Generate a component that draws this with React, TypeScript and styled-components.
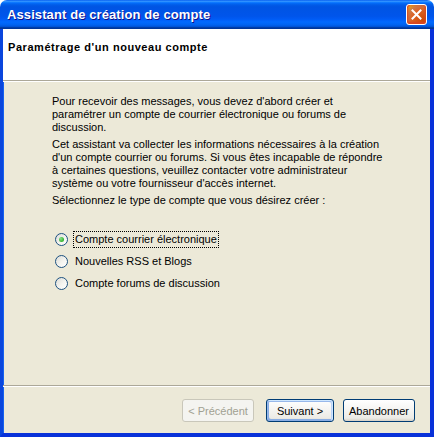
import React from "react";
import styled, { createGlobalStyle } from "styled-components";

const Global = createGlobalStyle`
  html, body { margin: 0; padding: 0; background: #ffffff; }
  body { width: 434px; height: 437px; overflow: hidden; }
  * { box-sizing: border-box; }
`;

const Window = styled.div`
  width: 434px;
  height: 437px;
  display: flex;
  flex-direction: column;
  border-radius: 7px 7px 0 0;
  overflow: hidden;
  font-family: "Liberation Sans", Arial, sans-serif;
  font-size: 11px;
  color: #000;
`;

const TitleBar = styled.div`
  height: 29px;
  flex: none;
  display: flex;
  align-items: center;
  justify-content: space-between;
  padding: 0 7px 0 7px;
  background: linear-gradient(
    180deg,
    #0058ee 0%,
    #3593ff 4%,
    #288eff 6%,
    #127dff 8%,
    #036ffc 10%,
    #0262ee 14%,
    #0057e5 20%,
    #0054e3 24%,
    #0055eb 56%,
    #005bf5 66%,
    #026afe 76%,
    #0062ef 86%,
    #0052d6 92%,
    #0040ab 94%,
    #003092 100%
  );
`;

const Title = styled.span`
  font-family: "Liberation Sans", Arial, sans-serif;
  font-weight: bold;
  font-size: 13px;
  color: #fff;
  text-shadow: 1px 1px #0f1089;
  letter-spacing: 0.1px;
`;

const CloseButton = styled.div`
  width: 21px;
  height: 21px;
  border: 1px solid #fff;
  border-radius: 3px;
  display: flex;
  align-items: center;
  justify-content: center;
  background: radial-gradient(circle at 90% 90%, #cc4600 0, #dc6527 55%, #cd7546 70%, #e5a01a 90%, transparent 93%),
    #e04c28;
  box-shadow: inset 0 -1px 2px 1px #da4623;
`;

const Frame = styled.div`
  flex: 1;
  display: flex;
  flex-direction: column;
  border-left: 3px solid #0a46dd;
  border-right: 4px solid #0831d9;
  border-bottom: 4px solid #0831d9;
  background: #ece9d8;
  box-shadow: inset 1px 0 #1662f0;
`;

const Header = styled.div`
  height: 52px;
  flex: none;
  background: #fff;
  border-bottom: 1px solid #aca899;
  padding: 12px 0 0 5px;
`;

const HeaderTitle = styled.div`
  font-weight: bold;
  font-size: 11px;
  line-height: 13px;
  letter-spacing: 0.55px;
`;

const Content = styled.div`
  flex: 1;
  border-top: 1px solid #fff;
  padding: 13px 0 0 49px;
  display: flex;
  flex-direction: column;
`;

const Para = styled.p`
  margin: 0 0 4px 0;
  line-height: 13px;
  white-space: nowrap;
`;

const RadioList = styled.div`
  margin-top: 22px;
  display: flex;
  flex-direction: column;
  gap: 9px;
  padding-left: 3px;
`;

const RadioRow = styled.label`
  display: flex;
  align-items: center;
  height: 13px;
  gap: 6px;
`;

const RadioCircle = styled.span<{ $checked?: boolean }>`
  width: 13px;
  height: 13px;
  border-radius: 50%;
  border: 1px solid #1c5180;
  background: linear-gradient(135deg, #dcdcd7 0%, #f4f4f0 55%, #ffffff 100%);
  display: flex;
  align-items: center;
  justify-content: center;
  flex: none;
  &::after {
    content: "";
    display: ${(p) => (p.$checked ? "block" : "none")};
    width: 5px;
    height: 5px;
    border-radius: 50%;
    background: radial-gradient(circle at 35% 35%, #8ce28a 0%, #3cb83a 60%, #219f21 100%);
  }
`;

const RadioLabel = styled.span<{ $focused?: boolean }>`
  line-height: 13px;
  padding: 1px 1px;
  outline: ${(p) => (p.$focused ? "1px dotted #000" : "none")};
  outline-offset: 0;
`;

const Footer = styled.div`
  flex: none;
  border-top: 1px solid #aca899;
  box-shadow: inset 0 1px #fff;
  padding: 13px 15px 11px 0;
  display: flex;
  justify-content: flex-end;
  align-items: center;
`;

const Button = styled.button<{ $default?: boolean; $w: number; $gap?: number }>`
  width: ${(p) => p.$w}px;
  margin-left: ${(p) => p.$gap ?? 0}px;
  height: 23px;
  font-family: "Liberation Sans", Arial, sans-serif;
  font-size: 11px;
  color: #000;
  border: 1px solid #003c74;
  border-radius: 3px;
  padding: 0;
  background: linear-gradient(180deg, #ffffff 0%, #ecebe6 86%, #d6d0c5 100%);
  box-shadow: ${(p) =>
    p.$default
      ? "inset -1px 1px #cee7ff, inset 1px 2px #98b8ea, inset -2px 2px #bcd4f6, inset 1px -1px #89ade4, inset 2px -2px #89ade4"
      : "none"};
  &:disabled {
    color: #a1a192;
    border-color: #c9c7ba;
    background: #f4f4f0;
  }
`;

export default function App() {
  return (
    <>
      <Global />
      <Window>
        <TitleBar>
          <Title>Assistant de création de compte</Title>
          <CloseButton>
            <svg width="13" height="13" viewBox="0 0 13 13">
              <path d="M2.5 2.5 L10.5 10.5 M10.5 2.5 L2.5 10.5" stroke="#fff" strokeWidth="2" strokeLinecap="square" />
            </svg>
          </CloseButton>
        </TitleBar>
        <Frame>
          <Header>
            <HeaderTitle>Paramétrage d'un nouveau compte</HeaderTitle>
          </Header>
          <Content>
            <Para>
              Pour recevoir des messages, vous devez d'abord créer et
              <br />
              paramétrer un compte de courrier électronique ou forums de
              <br />
              discussion.
            </Para>
            <Para>
              Cet assistant va collecter les informations nécessaires à la création
              <br />
              d'un compte courrier ou forums. Si vous êtes incapable de répondre
              <br />
              à certaines questions, veuillez contacter votre administrateur
              <br />
              système ou votre fournisseur d'accès internet.
            </Para>
            <Para>Sélectionnez le type de compte que vous désirez créer :</Para>
            <RadioList>
              <RadioRow>
                <RadioCircle $checked />
                <RadioLabel $focused>Compte courrier électronique</RadioLabel>
              </RadioRow>
              <RadioRow>
                <RadioCircle />
                <RadioLabel>Nouvelles RSS et Blogs</RadioLabel>
              </RadioRow>
              <RadioRow>
                <RadioCircle />
                <RadioLabel>Compte forums de discussion</RadioLabel>
              </RadioRow>
            </RadioList>
          </Content>
          <Footer>
            <Button disabled $w={72}>&lt; Précédent</Button>
            <Button $default $w={68} $gap={12}>Suivant &gt;</Button>
            <Button $w={72} $gap={9}>Abandonner</Button>
          </Footer>
        </Frame>
      </Window>
    </>
  );
}
